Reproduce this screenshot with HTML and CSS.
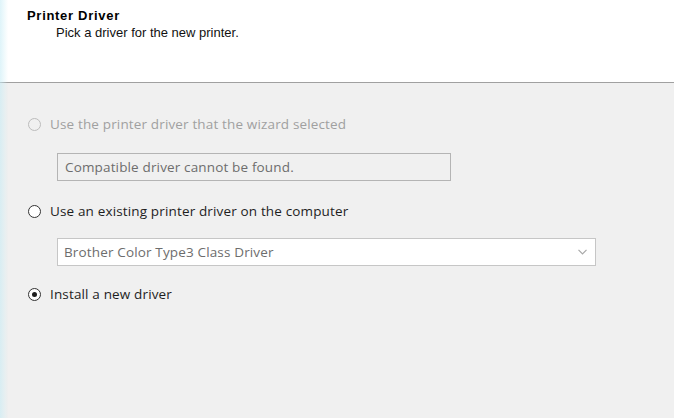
FILE: index.html
```html
<!doctype html>
<html lang="en">
<head>
    <meta charset="utf-8">
    <title>Printer Driver</title>
    <link rel="stylesheet" href="styles.css">
</head>
<body>
    <div class="header">
        <div class="title">Printer Driver</div>
        <div class="subtitle">Pick a driver for the new printer.</div>
    </div>
    <div class="content">
        <div class="option disabled">
            <span class="radio"></span>
            <span class="label">Use the printer driver that the wizard selected</span>
        </div>
        <div class="field readonly">Compatible driver cannot be found.</div>

        <div class="option">
            <span class="radio"></span>
            <span class="label">Use an existing printer driver on the computer</span>
        </div>
        <div class="field combo">
            <span>Brother Color Type3 Class Driver</span>
            <svg class="chevron" width="9" height="6" viewBox="0 0 9 6">
                <path d="M0.5 0.8 L4.5 4.8 L8.5 0.8" fill="none" stroke="#a8a8a8" stroke-width="1.2"/>
            </svg>
        </div>

        <div class="option">
            <span class="radio checked"></span>
            <span class="label">Install a new driver</span>
        </div>
    </div>
</body>
</html>
```

FILE: styles.css
```css
html, body {
    margin: 0;
    padding: 0;
    height: 100%;
}
body {
    background: #f0f0f0;
    font-family: "Open Sans", "Liberation Sans", sans-serif;
    color: #1e1e1e;
    overflow: hidden;
}
/* faint window edge on the left */
body::before {
    content: "";
    position: fixed;
    left: 0;
    top: 0;
    bottom: 0;
    width: 8px;
    background: linear-gradient(to right, rgba(200, 236, 245, 0.6), rgba(200, 236, 245, 0));
    pointer-events: none;
}
.header {
    background: #fff;
    height: 83px;
    box-sizing: border-box;
    padding: 8px 0 0 27px;
    border-bottom: 1px solid #a0a0a0;
    font-family: "Liberation Sans", Arial, sans-serif;
    font-size: 13px;
    color: #000;
}
.title {
    font-weight: bold;
    letter-spacing: 0.7px;
    line-height: 16px;
}
.subtitle {
    margin-left: 29px;
    line-height: 18px;
    color: #111;
}
.content {
    padding: 31px 0 0 28px;
}
.option {
    display: flex;
    align-items: center;
    height: 20px;
    font-size: 13.5px;
    letter-spacing: 0.15px;
}
.option .radio {
    width: 11px;
    height: 11px;
    border: 1px solid #333;
    border-radius: 50%;
    background: #fff;
    margin-right: 9px;
    position: relative;
}
.option .radio.checked::after {
    content: "";
    position: absolute;
    left: 3px;
    top: 3px;
    width: 5px;
    height: 5px;
    border-radius: 50%;
    background: #1e1e1e;
}
.option.disabled {
    color: #a0a0a0;
}
.option.disabled .radio {
    border-color: #bcbcbc;
    background: #f0f0f0;
}
.field {
    box-sizing: border-box;
    height: 28px;
    margin-left: 29px;
    border: 1px solid #b4b4b4;
    padding: 0 7px;
    display: flex;
    align-items: center;
    font-size: 13.5px;
    letter-spacing: 0.15px;
    color: #6d6d6d;
}
.field.readonly {
    width: 394px;
    margin-top: 19px;
    margin-bottom: 20px;
}
.field.combo {
    width: 539px;
    margin-top: 17px;
    margin-bottom: 18px;
    background: #fff;
    border-color: #c6c6c6;
    padding: 0 6px;
    justify-content: space-between;
}
.chevron {
    margin-right: 2px;
}
```
